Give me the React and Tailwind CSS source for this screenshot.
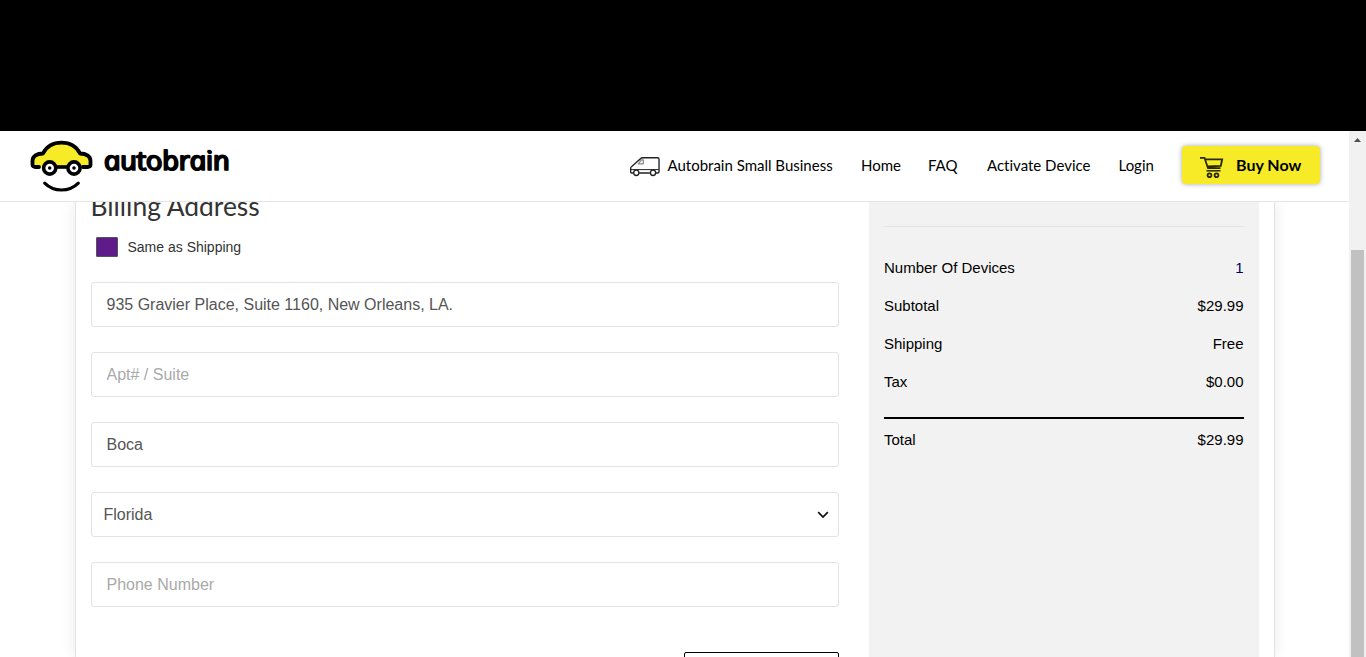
const arial = "font-['Liberation_Sans',Arial,sans-serif]";

function Logo() {
  return (
    <svg className="mt-[2px] h-[60px] w-[205px]" viewBox="0 0 205 60" fill="none">
      <g stroke="#000" strokeLinecap="round" strokeLinejoin="round">
        <path strokeWidth="3.800" fill="#f6eb26" d="M10 30H6.500C4.500 30 3.500 29.200 3.500 27.500V24C3.500 19 8 16.600 14 16.500C17.500 9.500 24 5.700 32.500 5.700C41 5.700 47.500 9.500 51 16.500C57 16.600 61.500 19 61.500 24V27.500C61.500 29.200 60.500 30 58.500 30H54" />
        <circle cx="20.700" cy="31" r="6.100" strokeWidth="3.600" fill="#fff" />
        <circle cx="45" cy="31" r="6.100" strokeWidth="3.600" fill="#fff" />
        <path strokeWidth="3.600" d="M27 30H38.500" strokeLinecap="butt" />
        <path strokeWidth="3.200" d="M15.700 46.100C25 55.300 40 55.300 49.300 46.100" />
      </g>
      <circle cx="20.700" cy="31" r="1.800" fill="#000" />
      <circle cx="45" cy="31" r="1.800" fill="#000" />
      <text
        transform="translate(76.500 33) skewX(13.500) scale(1.06 0.95)"
        textLength="119"
        lengthAdjust="spacing"
        fill="#000"
        stroke="#000"
        strokeWidth="1.800"
        strokeLinejoin="round"
        className="font-['Open_Sans',sans-serif] text-[28px] font-normal italic"
      >
        autobrain
      </text>
    </svg>
  );
}

function Van() {
  return (
    <svg className="mt-[3px] h-5 w-[30px]" viewBox="0 0 31 20" preserveAspectRatio="none" fill="none" stroke="#222" strokeWidth="1.400" strokeLinejoin="round">
      <path d="M3.500 16H1.500C.9 16 .7 15.600 .7 15V11.500C.7 10.500 1 10 1.800 9.500L7 5L11 1.600C11.600 1 12.200 .8 13 .8H28.500C29.500 .8 30 1.300 30 2.300V14.500C30 15.500 29.600 16 28.600 16H26.500M9.500 16H20.500" />
      <path d="M1 12.600H30" strokeWidth="1" />
      <path d="M8.500 6.800L12 2.800H13.800V6.800Z" stroke="#888" strokeWidth="1.200" />
      <circle cx="6.500" cy="15.800" r="2.700" fill="#fff" />
      <circle cx="23.800" cy="15.800" r="2.700" fill="#fff" />
    </svg>
  );
}

function Cart() {
  return (
    <svg className="mt-[7px] h-6 w-6" viewBox="0 0 24 24" fill="none" stroke="#2a2800" strokeWidth="1.800">
      <path d="M0 1.800H4.500L8 12.200H20.500M5 3.300H22.200L20.800 9.800L7.500 10.500" />
      <path d="M6.500 14.800H20.500" strokeWidth="1.500" />
      <circle cx="9.500" cy="19.300" r="1.900" />
      <circle cx="16.500" cy="19.300" r="1.900" />
    </svg>
  );
}

function Field({ value, placeholder }) {
  return (
    <input
      aria-label={placeholder || value}
      defaultValue={value}
      placeholder={placeholder}
      className="mb-[25px] block h-[45px] w-full rounded-[3px] border border-[#e3e3e3] bg-white px-[15px] text-[16px] text-[#555] placeholder:text-[#a9a9a9]"
    />
  );
}

function Row({ label, value, navy }) {
  return (
    <div className="flex h-[38px] items-center justify-between pl-[0.5px]">
      <span>{label}</span>
      <span className={navy ? "text-[#000060]" : ""}>{value}</span>
    </div>
  );
}

export default function App() {
  return (
    <div className={`flex h-[657px] w-[1366px] flex-col overflow-hidden bg-white ${arial}`}>
      <div className="h-[131px] shrink-0 bg-black" />
      <div className="flex min-h-0 flex-1">
        <div className="flex w-[1349px] flex-col">
          <header className="flex h-[71px] shrink-0 items-center border-b border-[#e5e5e5] pl-[29px] font-['Lato',sans-serif] text-[15px] text-black [font-variant-ligatures:none]">
            <Logo />
            <nav className="-mt-px ml-[396px] flex items-center whitespace-nowrap">
              <a className="flex w-[231px] items-center gap-[7.5px]">
                <Van />
                Autobrain Small Business
              </a>
              <a className="w-[67px]">Home</a>
              <a className="w-[59px]">FAQ</a>
              <a className="w-[131.500px]">Activate Device</a>
              <a className="w-[63px]">Login</a>
            </nav>
            <button className="-mt-[3px] flex h-[38px] w-[138px] items-center rounded-[4px] bg-[#f6eb26] pl-[18.5px] text-[16px] font-bold shadow-[0_0_5px_rgba(0,0,0,0.35)]">
              <Cart />
              <span className="ml-3">Buy Now</span>
            </button>
          </header>
          <main className="flex flex-1 justify-center overflow-hidden">
            <div className="flex w-[1200px] justify-between border-x border-[#e3e3e3] px-[15px] shadow-[0_0_14px_rgba(0,0,0,0.09)]">
              <section className="w-[748px]">
                <h2 className="-mt-[14px] h-[36px] font-['Lato',sans-serif] text-[26.4px] leading-[36px] text-[#333]">Billing Address</h2>
                <label className="mt-[13px] flex h-5 items-center pl-[5px] text-[14px] text-[#333]">
                  <span className="mr-[10px] h-5 w-[22px] rounded-[1px] border border-[#555] bg-[#5e1b89]" />
                  Same as Shipping
                </label>
                <div className="mt-[25px]">
                  <Field value="935 Gravier Place, Suite 1160, New Orleans, LA." />
                  <Field placeholder="Apt# / Suite" />
                  <Field value="Boca" />
                  <div className="mb-[25px] flex h-[45px] items-center justify-between rounded-[3px] border border-[#e3e3e3] pr-[9px] pl-3 text-[16px] text-[#555]">
                    Florida
                    <svg className="h-3 w-3" viewBox="0 0 12 12" fill="none" stroke="#111" strokeWidth="1.700">
                      <path d="M1.200 3.200L6 8L10.800 3.200" />
                    </svg>
                  </div>
                  <Field placeholder="Phone Number" />
                </div>
                <div className="mt-[45px] ml-auto h-[45px] w-[155px] rounded-[2px] border border-black" />
              </section>
              <aside className="w-[390px] bg-[#f2f2f2] px-[15px] text-[15px] text-black">
                <div className="h-[25px] border-b border-[#e3e3e3]" />
                <div className="mt-[22px] mb-4 border-b-2 border-black pb-4">
                  <Row label="Number Of Devices" value="1" navy />
                  <Row label="Subtotal" value="$29.99" />
                  <Row label="Shipping" value="Free" />
                  <Row label="Tax" value="$0.00" />
                </div>
                <div className="-mt-[14px]">
                  <Row label="Total" value="$29.99" />
                </div>
              </aside>
            </div>
          </main>
        </div>
        <div className="flex w-[17px] flex-col items-center bg-[#f1f1f1]">
          <svg className="mt-[7px] h-[4px] w-[7px]" viewBox="0 0 7 4">
            <path d="M0 4L3.500 0L7 4Z" fill="#505050" />
          </svg>
          <div className="mt-[108px] w-[13px] flex-1 bg-[#c1c1c1]" />
        </div>
      </div>
    </div>
  );
}
